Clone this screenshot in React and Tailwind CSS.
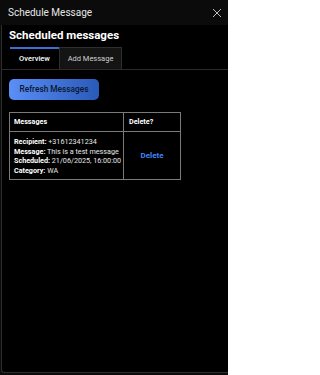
import React from "react";

export default function App() {
  return (
    <div
      className="w-[228px] h-[375px] bg-[#0b0b0b] flex flex-col text-white overflow-hidden"
      style={{ fontFamily: "Roboto, 'Liberation Sans', sans-serif" }}
    >
      <div className="h-[25px] flex items-center justify-between pl-[8px] pr-[6px] shrink-0">
        <span className="text-[10px] text-[#e6e6e6]">Schedule Message</span>
        <svg width="10" height="10" viewBox="0 0 10 10">
          <path d="M1 1L9 9M9 1L1 9" stroke="#bdbdbd" strokeWidth="1" />
        </svg>
      </div>
      <div className="flex-1 mb-[2px] ml-[1px] bg-black border-l border-b border-[#2e2e2e] rounded-bl-[3px] flex flex-col">
        <div className="pl-[7px] pt-[2px]">
          <div className="text-[11.5px] font-bold text-white leading-[16px]">Scheduled messages</div>
        </div>
        <div className="flex mt-[4px] border-b border-[#2a2a2a] -ml-[1px] pl-[9px]">
          <div className="w-[49px] h-[22px] border-t-2 border-[#3a6fd6] flex items-center justify-center text-[7.5px] font-medium text-white bg-black">
            Overview
          </div>
          <div className="w-[63px] h-[22px] bg-[#141414] border border-b-0 border-[#2e2e2e] flex items-center justify-center text-[7.5px] text-[#d0d0d0]">
            Add Message
          </div>
        </div>
        <div className="pl-[7px] pt-[9px]">
          <button className="w-[90px] h-[21px] rounded-[5px] bg-gradient-to-r from-[#5b8ff7] to-[#2a5ab8] text-[8.3px] font-medium text-[#0a1630] flex items-center justify-center">
            Refresh Messages
          </button>
          <table className="mt-[12px] w-[172px] border-collapse border border-[#7a7a7a] text-[7.2px] leading-[9.6px]">
            <thead>
              <tr className="h-[19px]">
                <th className="text-left font-bold border border-[#7a7a7a] pl-[4px] w-[114px] text-white">Messages</th>
                <th className="text-left font-bold border border-[#7a7a7a] pl-[5px] text-white">Delete?</th>
              </tr>
            </thead>
            <tbody>
              <tr className="h-[48px]">
                <td className="border border-[#7a7a7a] pl-[4px] pt-[5px] pb-[4px] text-[#e6e6e6] whitespace-nowrap">
                  <div><span className="font-bold text-white">Recipient:</span> +31612341234</div>
                  <div><span className="font-bold text-white">Message:</span> This is a test message</div>
                  <div><span className="font-bold text-white">Scheduled:</span> 21/06/2025, 16:00:00</div>
                  <div><span className="font-bold text-white">Category:</span> WA</div>
                </td>
                <td className="border border-[#7a7a7a] text-center">
                  <span className="text-[#3d86f7] font-bold text-[8px]">Delete</span>
                </td>
              </tr>
            </tbody>
          </table>
        </div>
      </div>
    </div>
  );
}
